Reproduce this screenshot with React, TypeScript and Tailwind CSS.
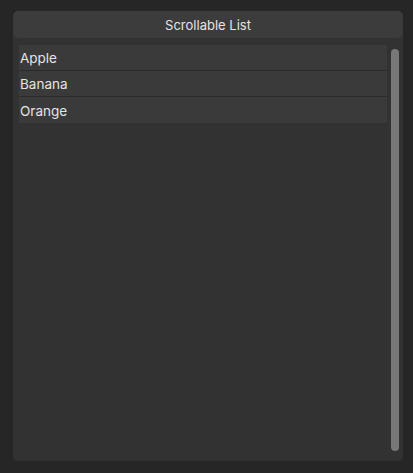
export default function App() {
  const items = ["Apple", "Banana", "Orange"];
  return (
    <div
      className="w-[413px] h-[473px] bg-[#262626] pt-[11px] pl-[13px] text-[13px] text-[#e4e4e4]"
      style={{ fontFamily: "Inter, 'Liberation Sans', sans-serif" }}
    >
      <div className="w-[390px] h-[450px] rounded-[5px] bg-[#323232] flex flex-col">
        <div className="h-[27px] shrink-0 rounded-[5px] bg-[#3c3c3c] flex items-center justify-center pt-[3px]">
          Scrollable List
        </div>
        <div className="flex flex-1 pl-[6px] pt-[7px] gap-[4px]">
          <div className="w-[368px] flex flex-col">
            {items.map((item, i) => (
              <div
                key={item}
                className={
                  "h-[26px] bg-[#3a3a3a] flex items-center pl-[1px] pt-[2px] text-[13.5px] " +
                  (i < items.length - 1 ? "border-b border-[#2b2b2b]" : "")
                }
              >
                {item}
              </div>
            ))}
          </div>
          <div className="w-[8px] mt-[4px] mb-[10px] rounded-full bg-[#787878]" />
        </div>
      </div>
    </div>
  );
}
